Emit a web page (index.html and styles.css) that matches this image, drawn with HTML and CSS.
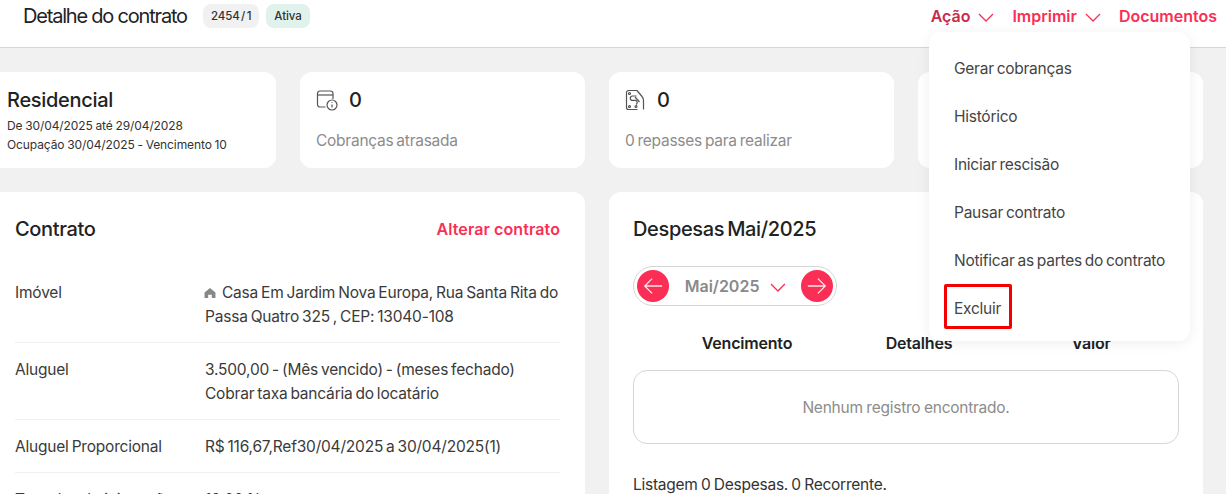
FILE: index.html
```html
<!DOCTYPE html>
<html lang="pt-BR">
<head>
  <meta charset="UTF-8">
  <title>Detalhe do contrato</title>
  <link rel="stylesheet" href="styles.css">
</head>
<body>
  <div class="header">
    <div class="header-left">
      <h1>Detalhe do contrato</h1>
      <span class="badge">2454 / 1</span>
      <span class="badge badge-green">Ativa</span>
    </div>
    <div class="nav">
      <a class="nav-link nav-active">Ação
        <svg class="chev" viewBox="0 0 16 9"><path d="M1 1l7 7 7-7"/></svg>
      </a>
      <a class="nav-link">Imprimir
        <svg class="chev" viewBox="0 0 16 9"><path d="M1 1l7 7 7-7"/></svg>
      </a>
      <a class="nav-link">Documentos</a>
    </div>
  </div>

  <div class="menu">
    <div class="menu-item">Gerar cobranças</div>
    <div class="menu-item">Histórico</div>
    <div class="menu-item">Iniciar rescisão</div>
    <div class="menu-item">Pausar contrato</div>
    <div class="menu-item">Notificar as partes do contrato</div>
    <div class="menu-item menu-marked">Excluir</div>
  </div>

  <div class="content">
    <div class="cards">
      <div class="card">
        <h3>Residencial</h3>
        <p class="card-small">De 30/04/2025 até 29/04/2028</p>
        <p class="card-small">Ocupação 30/04/2025 - Vencimento 10</p>
      </div>
      <div class="card">
        <div class="card-top">
          <svg class="card-icon" viewBox="0 0 22 22">
            <path d="M9.500 18H4a2.500 2.500 0 0 1-2.500-2.500V4.500A2.500 2.500 0 0 1 4 2h10.500A2.500 2.500 0 0 1 17 4.500V10"/>
            <path d="M1.500 6h15.500"/>
            <circle cx="16" cy="16" r="5"/>
            <path d="M16 15.500v3M16 13.300v.7"/>
          </svg>
          <span class="count">0</span>
        </div>
        <p class="card-label">Cobranças atrasada</p>
      </div>
      <div class="card">
        <div class="card-top">
          <svg class="card-icon card-icon-tall" viewBox="0 0 20 22">
            <path d="M12 1.500H3.500a2 2 0 0 0-2 2v15a2 2 0 0 0 2 2h9"/>
            <path d="M12 1.500l5 6c1 1.200 1.500 2.500 1.500 4v9"/>
            <circle cx="4.500" cy="4.500" r="1"/>
            <circle cx="4.500" cy="17.500" r="1"/>
            <circle cx="11" cy="17.500" r="1"/>
            <path d="M11.500 7H7.500a2.200 2.200 0 0 0 0 4.400h3a2.200 2.200 0 0 1 .5 4.100"/>
            <path d="M10 8l4.500 5"/>
          </svg>
          <span class="count">0</span>
        </div>
        <p class="card-label">0 repasses para realizar</p>
      </div>
      <div class="card"></div>
    </div>

    <div class="panels">
      <div class="panel">
        <div class="panel-title">
          <h2>Contrato</h2>
          <a class="panel-link">Alterar contrato</a>
        </div>
        <div class="rows">
          <div class="row">
            <div class="row-label">Imóvel</div>
            <div>
              <svg class="house" viewBox="0 0 12 11"><path d="M6 0L0 5v6h4V7.500h4V11h4V5z"/></svg>
              Casa Em Jardim Nova Europa, Rua Santa Rita do Passa Quatro 325 , CEP: 13040-108
            </div>
          </div>
          <div class="row">
            <div class="row-label">Aluguel</div>
            <div>3.500,00 - (Mês vencido) - (meses fechado)<br>Cobrar taxa bancária do locatário</div>
          </div>
          <div class="row">
            <div class="row-label">Aluguel Proporcional</div>
            <div>R$ 116,67,Ref30/04/2025 a 30/04/2025(1)</div>
          </div>
          <div class="row">
            <div class="row-label">Taxa de administração</div>
            <div>10,00 %</div>
          </div>
        </div>
      </div>

      <div class="panel panel-right">
        <div class="panel-title">
          <h2>Despesas Mai/2025</h2>
        </div>
        <div class="pager">
          <span class="pager-btn">
            <svg viewBox="0 0 24 24"><path d="M22 12H3M11 4l-8 8 8 8"/></svg>
          </span>
          <span class="pager-month">Mai/2025</span>
          <svg class="chev" viewBox="0 0 16 9"><path d="M1 1l7 7 7-7"/></svg>
          <span class="pager-btn">
            <svg viewBox="0 0 24 24"><path d="M2 12h19M13 4l8 8-8 8"/></svg>
          </span>
        </div>
        <div class="table-head">
          <span>Vencimento</span>
          <span>Detalhes</span>
          <span>Valor</span>
        </div>
        <div class="empty">Nenhum registro encontrado.</div>
        <p class="summary">Listagem 0 Despesas. 0 Recorrente.</p>
      </div>
    </div>
  </div>
</body>
</html>
```

FILE: styles.css
```css
html, body {
  height: 494px;
  overflow: hidden;
}
body {
  font-family: Inter, "Noto Sans", sans-serif;
  margin: 0;
  background-color: #f1f1f1;
  color: #333;
  font-size: 15.5px;
  letter-spacing: -0.25px;
  word-spacing: -1.2px;
  position: relative;
}
h1, h2, h3, p {
  margin: 0;
  font-weight: 500;
}
.header {
  background-color: white;
  border-bottom: 1px solid #d6d6d6;
  height: 43px;
  padding: 4px 7px 0 23px;
  display: flex;
  justify-content: space-between;
  align-items: flex-start;
}
.header-left {
  display: flex;
  align-items: center;
}
.header-left h1 {
  font-size: 20px;
  font-weight: 400;
  letter-spacing: -1.2px;
  word-spacing: 0;
  color: #222;
  margin-right: 16px;
  line-height: 24px;
}
.badge {
  background-color: #f1f1f1;
  border-radius: 8px;
  font-size: 11.5px;
  font-weight: 500;
  line-height: 24px;
  padding: 0 8px;
  margin-right: 8px;
  letter-spacing: -0.1px;
  word-spacing: -1.5px;
}
.badge-green {
  background-color: #e0f2ec;
  margin-left: -1px;
}
.nav {
  display: flex;
  gap: 16px;
  line-height: 24px;
}
.nav-link {
  color: #fb2e55;
  font-size: 16px;
  font-weight: 600;
  letter-spacing: 0;
  word-spacing: 0;
  display: flex;
  align-items: center;
  gap: 8px;
  margin-right: 2px;
}
.nav-active {
  color: #c92c4b;
}
.chev {
  width: 16px;
  height: 9px;
  fill: none;
  stroke: #fb2e55;
  stroke-width: 1.3;
  margin-top: 3px;
}
.menu {
  position: absolute;
  top: 32px;
  left: 929px;
  width: 261px;
  box-sizing: border-box;
  padding: 12px 15px;
  background-color: white;
  border-radius: 12px;
  box-shadow: 0 2px 14px rgba(0, 0, 0, 0.07);
  z-index: 5;
}
.menu-item {
  height: 48px;
  line-height: 50px;
  padding: 0 10px;
  color: #444;
  white-space: nowrap;
}
.menu-marked {
  width: fit-content;
  height: 45px;
  padding-right: 11px;
  box-shadow: inset 0 0 0 3px #f50000;
  border-radius: 2px;
}
.content {
  margin-left: -9px;
  width: 1212px;
  padding-top: 24px;
}
.cards {
  display: grid;
  grid-template-columns: repeat(4, 285px);
  gap: 24px;
}
.card {
  background-color: white;
  border-radius: 12px;
  height: 96px;
  box-sizing: border-box;
  padding: 16px;
}
.card h3 {
  font-size: 20px;
  line-height: 24px;
  letter-spacing: -0.3px;
  color: #222;
  margin-bottom: 4px;
}
.card-small {
  font-size: 12px;
  line-height: 19px;
  letter-spacing: -0.1px;
  word-spacing: -0.5px;
  font-weight: 400;
  color: #333;
}
.card-top {
  display: flex;
  align-items: center;
  gap: 11px;
  height: 24px;
  margin-bottom: 17px;
}
.card-icon {
  width: 22px;
  height: 22px;
  fill: none;
  stroke: #555;
  stroke-width: 1.2;
}
.card-icon-tall {
  width: 20px;
  margin-right: 1px;
}
.count {
  font-size: 20px;
  font-weight: 500;
  color: #222;
}
.card-label {
  line-height: 24px;
  font-weight: 400;
  color: #8c8c8c;
}
.panels {
  display: grid;
  grid-template-columns: 594px 594px;
  gap: 24px;
  margin-top: 24px;
}
.panel {
  background-color: white;
  border-radius: 12px;
  height: 400px;
  padding: 24px 25px 24px 24px;
}
.panel-right {
  padding-right: 24px;
}
.panel-title {
  display: flex;
  justify-content: space-between;
  align-items: center;
  height: 26px;
}
.panel-title h2 {
  font-size: 20px;
  color: #222;
  letter-spacing: -0.35px;
  word-spacing: -2px;
}
.panel-link {
  color: #fb2e55;
  font-size: 16px;
  font-weight: 600;
  letter-spacing: 0.1px;
  word-spacing: 0;
}
.rows {
  margin-top: 24px;
}
.row {
  display: flex;
  padding: 15px 0 13px;
  border-bottom: 1px solid #efefef;
  line-height: 24px;
  color: #3a3a3a;
  letter-spacing: -0.2px;
}
.row-label {
  width: 190px;
  flex-shrink: 0;
}
.house {
  width: 12px;
  height: 10px;
  fill: #888;
  margin-right: 3px;
  margin-left: -1px;
}
.pager {
  display: flex;
  align-items: center;
  width: 204px;
  height: 40px;
  box-sizing: border-box;
  margin-top: 24px;
  padding: 0 3px;
  border: 1px solid #d6d6d6;
  border-radius: 20px;
}
.pager .chev {
  margin: 2px 15px 0 11px;
}
.pager-btn {
  width: 32px;
  height: 32px;
  background-color: #fb2e55;
  border-radius: 50%;
  display: flex;
  align-items: center;
  justify-content: center;
}
.pager-btn svg {
  width: 22px;
  height: 22px;
  fill: none;
  stroke: #ffe6ea;
  stroke-width: 1.4;
}
.pager-month {
  margin-left: 16px;
  font-size: 16px;
  font-weight: 600;
  letter-spacing: 0;
  word-spacing: 0;
  color: #8a8a8a;
}
.table-head {
  display: grid;
  grid-template-columns: repeat(3, 172px);
  padding-left: 28px;
  margin-top: 25px;
  line-height: 24px;
  font-size: 16px;
  letter-spacing: -0.2px;
  font-weight: 600;
  color: #222;
  text-align: center;
}
.empty {
  margin-top: 15px;
  height: 74px;
  line-height: 74px;
  box-sizing: border-box;
  border: 1px solid #d6d6d6;
  border-radius: 14px;
  text-align: center;
  color: #8c8c8c;
  word-spacing: -0.5px;
}
.summary {
  margin-top: 29px;
  line-height: 24px;
  font-weight: 400;
  color: #333;
  word-spacing: -0.8px;
}
```
